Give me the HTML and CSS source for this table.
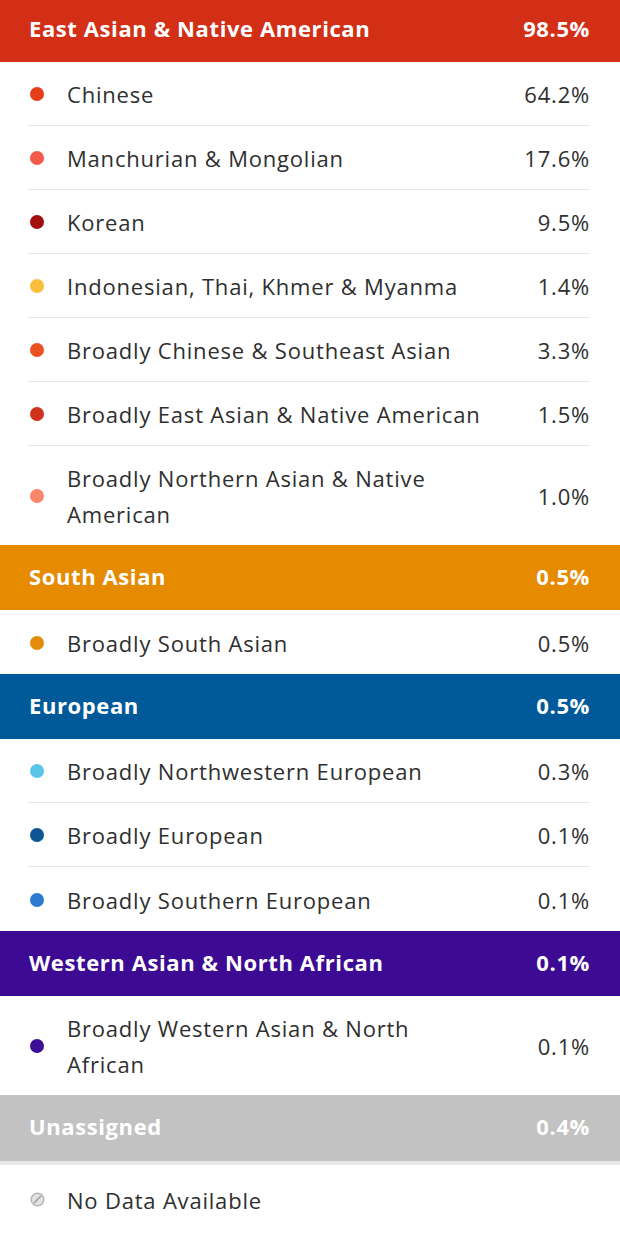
FILE: index.html
```html
<!DOCTYPE html>
<html>
<head>
<meta charset="utf-8">
<link rel="stylesheet" href="styles.css">
</head>
<body>
<div class="list">
  <div class="head head-first red"><span>East Asian &amp; Native American</span><span>98.5%</span></div>
  <div class="rows">
    <div class="row"><span class="dot c1"></span><span class="name">Chinese</span><span class="pct">64.2%</span></div>
    <div class="row"><span class="dot c2"></span><span class="name">Manchurian &amp; Mongolian</span><span class="pct">17.6%</span></div>
    <div class="row"><span class="dot c3"></span><span class="name">Korean</span><span class="pct">9.5%</span></div>
    <div class="row"><span class="dot c4"></span><span class="name">Indonesian, Thai, Khmer &amp; Myanma</span><span class="pct">1.4%</span></div>
    <div class="row"><span class="dot c5"></span><span class="name">Broadly Chinese &amp; Southeast Asian</span><span class="pct">3.3%</span></div>
    <div class="row"><span class="dot c6"></span><span class="name">Broadly East Asian &amp; Native American</span><span class="pct">1.5%</span></div>
    <div class="row"><span class="dot c7"></span><span class="name">Broadly Northern Asian &amp; Native American</span><span class="pct">1.0%</span></div>
  </div>
  <div class="head orange"><span>South Asian</span><span>0.5%</span></div>
  <div class="rows">
    <div class="row"><span class="dot c8"></span><span class="name">Broadly South Asian</span><span class="pct">0.5%</span></div>
  </div>
  <div class="head blue"><span>European</span><span>0.5%</span></div>
  <div class="rows">
    <div class="row"><span class="dot c9"></span><span class="name">Broadly Northwestern European</span><span class="pct">0.3%</span></div>
    <div class="row"><span class="dot c10"></span><span class="name">Broadly European</span><span class="pct">0.1%</span></div>
    <div class="row"><span class="dot c11"></span><span class="name">Broadly Southern European</span><span class="pct">0.1%</span></div>
  </div>
  <div class="head purple"><span>Western Asian &amp; North African</span><span>0.1%</span></div>
  <div class="rows">
    <div class="row"><span class="dot c12"></span><span class="name">Broadly Western Asian &amp; North African</span><span class="pct">0.1%</span></div>
  </div>
  <div class="head gray"><span>Unassigned</span><span>0.4%</span></div>
  <div class="rule"></div>
  <div class="rows">
    <div class="row row-last">
      <svg class="nodata" width="15" height="15" viewBox="0 0 15 15"><circle cx="7.5" cy="7.5" r="6.3" fill="#e2e2e2" stroke="#b4b4b4" stroke-width="1.4"/><line x1="4" y1="11" x2="11" y2="4" stroke="#9e9e9e" stroke-width="1.6"/></svg>
      <span class="name">No Data Available</span>
    </div>
  </div>
</div>
</body>
</html>
```
FILE: styles.css
```css
html, body {
  margin: 0;
  padding: 0;
  background: #fff;
}
body {
  width: 620px;
  height: 1234px;
  overflow: hidden;
  font-family: "Open Sans", Lato, sans-serif;
  font-size: 22px;
  color: #2f2f2f;
}
.list {
  display: flex;
  flex-direction: column;
}
.head {
  height: 65px;
  box-sizing: border-box;
  display: flex;
  align-items: center;
  justify-content: space-between;
  padding: 0 30px 4px 29px;
  color: #fff;
  font-weight: 700;
  font-size: 22px;
  letter-spacing: 0.6px;
}
.head-first { height: 62px; padding-bottom: 6px; }
.red { background: #d22f16; }
.orange { background: #e68a00; }
.blue { background: #005a9a; }
.purple { background: #3d0a94; }
.gray { background: #c2c2c2; height: 66px; }
.rule { height: 4px; background: #e8e8e8; }
.rows {
  display: flex;
  flex-direction: column;
  padding: 0 30px 0 28px;
}
.row {
  display: flex;
  align-items: center;
  min-height: 63px;
  border-bottom: 1px solid #e6e6e6;
  line-height: 36px;
  padding: 14px 0 13px;
  box-sizing: border-box;
  letter-spacing: 0.8px;
}
.rows .row:last-child { border-bottom: none; min-height: 64px; }
.row-last { min-height: 68px !important; }
.dot {
  width: 14px;
  height: 14px;
  border-radius: 50%;
  margin-left: 2px;
  margin-right: 23px;
  flex: none;
}
.nodata { margin-left: 2px; margin-right: 22px; flex: none; }
.name { flex: 0 1 auto; max-width: 420px; }
.pct { flex: none; margin-left: auto; text-align: right; }
.c1 { background: #e63d1a; }
.c2 { background: #f25a4a; }
.c3 { background: #a30e0e; }
.c4 { background: #f9be3a; }
.c5 { background: #ec5221; }
.c6 { background: #d0311a; }
.c7 { background: #f7866a; }
.c8 { background: #e38b0a; }
.c9 { background: #5ac5ea; }
.c10 { background: #0d5593; }
.c11 { background: #2a7bd2; }
.c12 { background: #3d0e96; }
```
